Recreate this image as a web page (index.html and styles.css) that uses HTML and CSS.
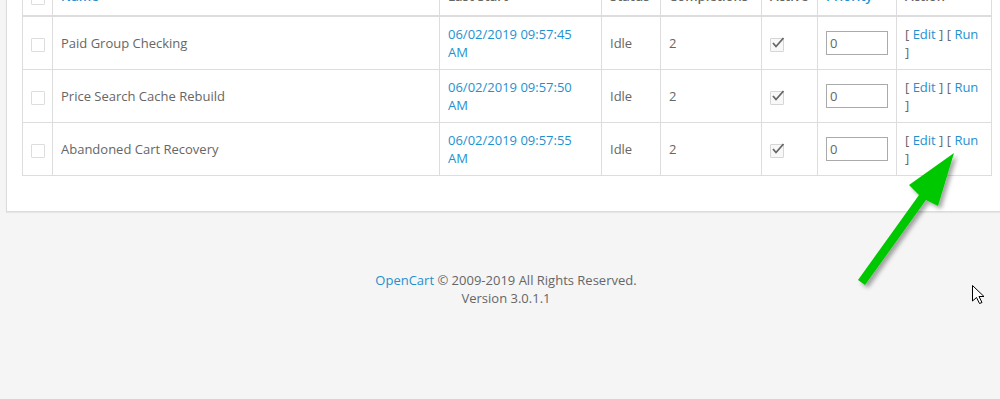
FILE: index.html
```html
<!DOCTYPE html>
<html lang="en">
<head>
    <meta charset="UTF-8">
    <meta name="viewport" content="width=device-width, initial-scale=1.0">
    <title>Cron Jobs</title>

    <link rel="stylesheet" href="styles.css">
</head>
<body>

    <div class="content">
        <div class="panel">
            <table class="cron-table">
                <colgroup>
                    <col class="c-check">
                    <col class="c-name">
                    <col class="c-start">
                    <col class="c-status">
                    <col class="c-done">
                    <col class="c-active">
                    <col class="c-priority">
                    <col class="c-action">
                </colgroup>
                <thead>
                    <tr>
                        <th><span class="box"></span></th>
                        <th><a href="#">Name</a></th>
                        <th>Last Start</th>
                        <th>Status</th>
                        <th>Completions</th>
                        <th>Active</th>
                        <th><a href="#">Priority</a></th>
                        <th>Action</th>
                    </tr>
                </thead>
                <tbody>
                    <tr>
                        <td><span class="box"></span></td>
                        <td>Paid Group Checking</td>
                        <td><a href="#">06/02/2019 09:57:45 AM</a></td>
                        <td>Idle</td>
                        <td>2</td>
                        <td><span class="box checked"><svg viewBox="0 0 14 14" width="14" height="14"><path d="M2 7 L5 10.5 L12.5 2" fill="none" stroke="#666" stroke-width="1.8"/></svg></span></td>
                        <td><input type="text" class="priority" value="0"></td>
                        <td class="action">[ <a href="#">Edit</a> ] [ <a href="#">Run</a> ]</td>
                    </tr>
                    <tr>
                        <td><span class="box"></span></td>
                        <td>Price Search Cache Rebuild</td>
                        <td><a href="#">06/02/2019 09:57:50 AM</a></td>
                        <td>Idle</td>
                        <td>2</td>
                        <td><span class="box checked"><svg viewBox="0 0 14 14" width="14" height="14"><path d="M2 7 L5 10.5 L12.5 2" fill="none" stroke="#666" stroke-width="1.8"/></svg></span></td>
                        <td><input type="text" class="priority" value="0"></td>
                        <td class="action">[ <a href="#">Edit</a> ] [ <a href="#">Run</a> ]</td>
                    </tr>
                    <tr>
                        <td><span class="box"></span></td>
                        <td>Abandoned Cart Recovery</td>
                        <td><a href="#">06/02/2019 09:57:55 AM</a></td>
                        <td>Idle</td>
                        <td>2</td>
                        <td><span class="box checked"><svg viewBox="0 0 14 14" width="14" height="14"><path d="M2 7 L5 10.5 L12.5 2" fill="none" stroke="#666" stroke-width="1.8"/></svg></span></td>
                        <td><input type="text" class="priority" value="0"></td>
                        <td class="action">[ <a href="#">Edit</a> ] [ <a href="#">Run</a> ]</td>
                    </tr>
                </tbody>
            </table>
        </div>

        <footer class="footer">
            <a href="#">OpenCart</a> &copy; 2009-2019 All Rights Reserved.<br>
            Version 3.0.1.1
        </footer>
    </div>

    <!-- annotation arrow drawn over the screenshot -->
    <svg class="arrow" width="1000" height="399" viewBox="0 0 1000 399">
        <defs>
            <filter id="shadow" x="-20%" y="-20%" width="140%" height="140%">
                <feDropShadow dx="3" dy="3" stdDeviation="2" flood-color="#000" flood-opacity="0.35"/>
            </filter>
        </defs>
        <polygon points="954,153 938,206 926,200 865,285 858,280 919,195 909,185" fill="#00c800" filter="url(#shadow)"/>
    </svg>

    <svg class="cursor" width="16" height="20" viewBox="0 0 16 20">
        <polygon points="0.5,0.5 0.5,16 4.5,12.5 7.5,18.5 10,17.5 7,11.5 12,11.5" fill="#fff" stroke="#000" stroke-width="1"/>
    </svg>

</body>
</html>
```

FILE: styles.css
```css
body {
    font-family: "Open Sans", "DejaVu Sans", sans-serif;
    font-size: 13px;
    line-height: 18px;
    color: #666;
    background-color: #f5f5f5;
    margin: 0;
    padding: 0;
    overflow: hidden;
    height: 399px;
}

a {
    color: #1e91cf;
    text-decoration: none;
}

.content {
    width: 1000px;
    margin-left: 6px;
}

.panel {
    background-color: #fff;
    border: 1px solid #dcdcdc;
    box-shadow: 0 1px 1px rgba(0, 0, 0, 0.06);
    padding: 15px 15px 35px 15px;
    margin-top: -38px;
}

.cron-table {
    width: 969px;
    border-collapse: collapse;
    table-layout: fixed;
}

.c-check { width: 30px; }
.c-name { width: 387px; }
.c-start { width: 162px; }
.c-status { width: 59px; }
.c-done { width: 101px; }
.c-active { width: 56px; }
.c-priority { width: 79px; }
.c-action { width: 95px; }

.cron-table th,
.cron-table td {
    border: 1px solid #ddd;
    padding: 8px;
    text-align: left;
    vertical-align: middle;
}

.cron-table th {
    font-weight: 600;
    vertical-align: bottom;
    padding-bottom: 10px;
    border-bottom: 2px solid #ddd;
    color: #666;
}

.cron-table td.action {
    vertical-align: top;
}

.box {
    display: inline-block;
    width: 12px;
    height: 12px;
    border: 1px solid #ddd;
    border-radius: 1px;
    vertical-align: middle;
    position: relative;
}

.box.checked {
    border-color: #d6d6d6;
    background-color: #f8f8f8;
}

.box svg {
    position: absolute;
    left: 0;
    top: -3px;
}

.priority {
    width: 62px;
    height: 24px;
    box-sizing: border-box;
    border: 1px solid #aaa;
    padding: 0 3px;
    font-family: "Open Sans", "DejaVu Sans", sans-serif;
    font-size: 13px;
    color: #666;
    margin: 0;
}

.footer {
    text-align: center;
    padding-top: 59px;
}

.arrow {
    position: absolute;
    left: 0;
    top: 0;
    pointer-events: none;
}

.cursor {
    position: absolute;
    left: 972px;
    top: 285px;
}
```
